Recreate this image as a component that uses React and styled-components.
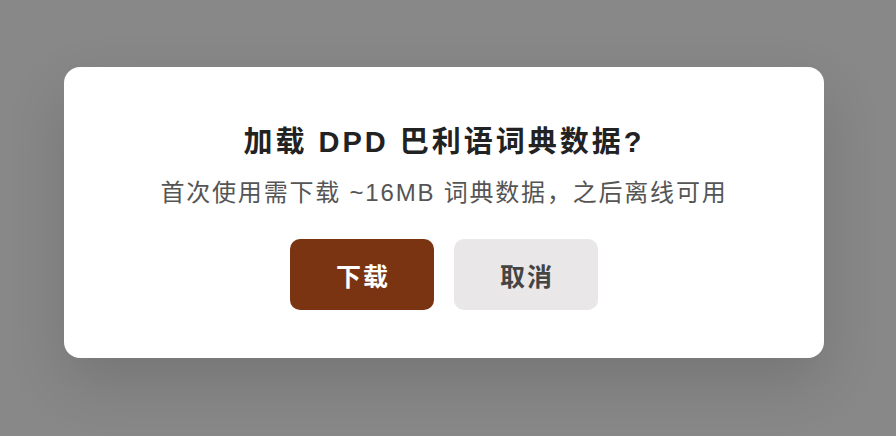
import React from 'react'
import styled, { createGlobalStyle } from 'styled-components'

const GlobalStyle = createGlobalStyle`
  html, body {
    margin: 0;
    padding: 0;
  }
  body {
    font-family: "Liberation Sans", "Noto Sans CJK SC", sans-serif;
  }
`

const Overlay = styled.div`
  width: 896px;
  height: 436px;
  background: #888888;
  display: flex;
  align-items: center;
  justify-content: center;
  padding: 0 8px 11px 0;
  box-sizing: border-box;
`
const Dialog = styled.div`
  width: 760px;
  box-sizing: border-box;
  background: #ffffff;
  border-radius: 16px;
  padding: 57px 0 48px;
  box-shadow: 0 24px 60px rgba(0, 0, 0, 0.14);
  display: flex;
  flex-direction: column;
  align-items: center;
`
const Title = styled.h2`
  margin: 0;
  font-size: 29px;
  line-height: 36px;
  font-weight: 700;
  letter-spacing: 3px;
  color: #222222;
`
const Message = styled.p`
  margin: 18px 0 0;
  font-size: 24px;
  line-height: 30px;
  letter-spacing: 1.8px;
  color: #555555;
`
const Actions = styled.div`
  display: flex;
  gap: 20px;
  margin-top: 31px;
`
const Button = styled.button`
  width: 144px;
  height: 71px;
  border: none;
  border-radius: 10px;
  font-family: inherit;
  font-size: 25px;
  font-weight: 700;
  letter-spacing: 2px;
  padding: 0 0 0 2px;
  background: ${(p) => (p.$primary ? '#7a3412' : '#e9e7e7')};
  color: ${(p) => (p.$primary ? '#ffffff' : '#444444')};
  cursor: pointer;
`

const App = () => {
  return (
    <>
      <GlobalStyle />
      <Overlay>
        <Dialog>
          <Title>加载 DPD 巴利语词典数据?</Title>
          <Message>首次使用需下载 ~16MB 词典数据，之后离线可用</Message>
          <Actions>
            <Button $primary>下载</Button>
            <Button>取消</Button>
          </Actions>
        </Dialog>
      </Overlay>
    </>
  )
}

export default App
